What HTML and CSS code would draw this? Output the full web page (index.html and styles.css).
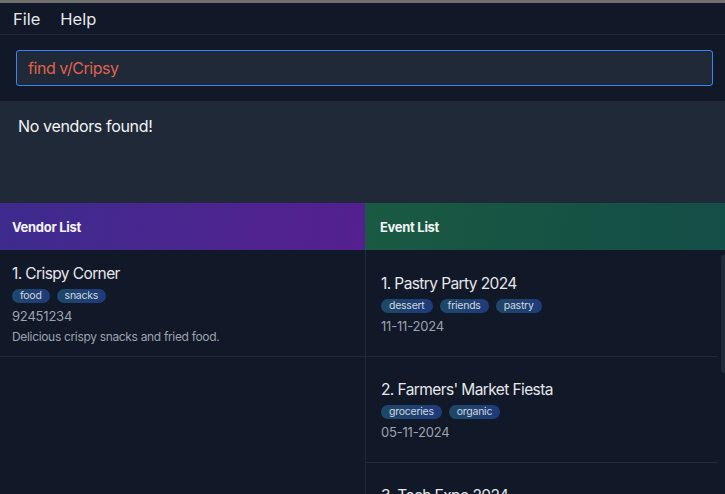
FILE: index.html
```html
<!DOCTYPE html>
<html>
<head>
<meta charset="utf-8">
<link rel="stylesheet" href="styles.css">
</head>
<body>
<div class="strip"></div>
<div class="menubar">
  <span class="menu-item">File</span>
  <span class="menu-item">Help</span>
</div>
<div class="command">
  <div class="input">find v/Cripsy</div>
</div>
<div class="result">No vendors found!</div>
<div class="panels">
  <div class="panel vendor">
    <div class="header vendor-header">Vendor List</div>
    <div class="list">
      <div class="card vcard">
        <div class="title">1. Crispy Corner</div>
        <div class="tags"><span class="tag">food</span><span class="tag">snacks</span></div>
        <div class="meta">92451234</div>
        <div class="desc">Delicious crispy snacks and fried food.</div>
      </div>
    </div>
  </div>
  <div class="panel event">
    <div class="header event-header">Event List</div>
    <div class="list elist">
      <div class="card ecard">
        <div class="title">1. Pastry Party 2024</div>
        <div class="tags"><span class="tag">dessert</span><span class="tag">friends</span><span class="tag">pastry</span></div>
        <div class="meta">11-11-2024</div>
      </div>
      <div class="card ecard">
        <div class="title">2. Farmers' Market Fiesta</div>
        <div class="tags"><span class="tag">groceries</span><span class="tag">organic</span></div>
        <div class="meta">05-11-2024</div>
      </div>
      <div class="card ecard">
        <div class="title">3. Tech Expo 2024</div>
        <div class="tags"><span class="tag">tech</span></div>
        <div class="meta">20-11-2024</div>
      </div>
      <div class="thumb"></div>
    </div>
  </div>
</div>
</body>
</html>
```
FILE: styles.css
```css
html, body {
  margin: 0;
  padding: 0;
  background: #111827;
  font-family: Inter, "Noto Sans", sans-serif;
  overflow: hidden;
  height: 494px;
}
.strip {
  height: 3px;
  background: #6f6f6d;
}
.menubar {
  display: flex;
  align-items: center;
  padding-left: 13px;
  gap: 20px;
  border-bottom: 1px solid #1f2937;
  box-sizing: border-box;
  height: 32px;
}
.menu-item {
  color: #e5e7eb;
  font-size: 16.5px;
}
.command {
  padding: 15px 12px 15px 16px;
}
.input {
  height: 36px;
  box-sizing: border-box;
  border: 1px solid #3b82f6;
  border-radius: 3px;
  background: #1f2937;
  color: #e0614d;
  font-size: 16px;
  letter-spacing: -0.45px;
  display: flex;
  align-items: center;
  padding-left: 11px;
}
.result {
  background: #1f2937;
  height: 102px;
  box-sizing: border-box;
  padding: 15px 18px;
  color: #f3f4f6;
  font-size: 16px;
  letter-spacing: -0.35px;
}
.panels {
  display: grid;
  grid-template-columns: 365px 1fr;
  height: 244px;
}
.panel {
  display: flex;
  flex-direction: column;
  min-width: 0;
}
.header {
  height: 47px;
  flex: none;
  display: flex;
  align-items: center;
  color: #f3f4f6;
  font-weight: 700;
  font-size: 13px;
  letter-spacing: -0.3px;
}
.vendor-header {
  background: linear-gradient(100deg, #3d2b8e 0%, #4a268f 50%, #551f90 100%);
  padding-left: 12px;
}
.event-header {
  background: linear-gradient(100deg, #1a5a42 0%, #165244 60%, #144e48 100%);
  padding-left: 15px;
}
.list {
  flex: 1;
  overflow: hidden;
  position: relative;
}
.elist {
  border-left: 1px solid #1f2937;
  padding-right: 7px;
  padding-top: 1px;
}
.card {
  border-bottom: 1px solid #1f2937;
}
.vcard {
  padding: 15px 12px 12px;
}
.ecard {
  padding: 24px 15px 22px;
  height: 106px;
  box-sizing: border-box;
}
.title {
  color: #e5e7eb;
  font-size: 15.5px;
  line-height: 18px;
  letter-spacing: -0.6px;
}
.tags {
  display: flex;
  gap: 7px;
  margin-top: 6px;
}
.tag {
  height: 14px;
  line-height: 14px;
  padding: 0 8px;
  border-radius: 7px;
  font-size: 10.5px;
  letter-spacing: -0.25px;
  color: #d1d5db;
  background: linear-gradient(90deg, #1e4868 0%, #1e3b7c 100%);
}
.meta {
  margin-top: 5px;
  color: #9ca3af;
  font-size: 13px;
  line-height: 16px;
  letter-spacing: -0.2px;
}
.desc {
  margin-top: 5px;
  color: #9ca3af;
  font-size: 12px;
  line-height: 15px;
  letter-spacing: -0.33px;
}
.thumb {
  position: absolute;
  right: 0;
  top: 5px;
  width: 4px;
  height: 118px;
  background: #212b3a;
  border-radius: 3px 0 0 3px;
}
```
